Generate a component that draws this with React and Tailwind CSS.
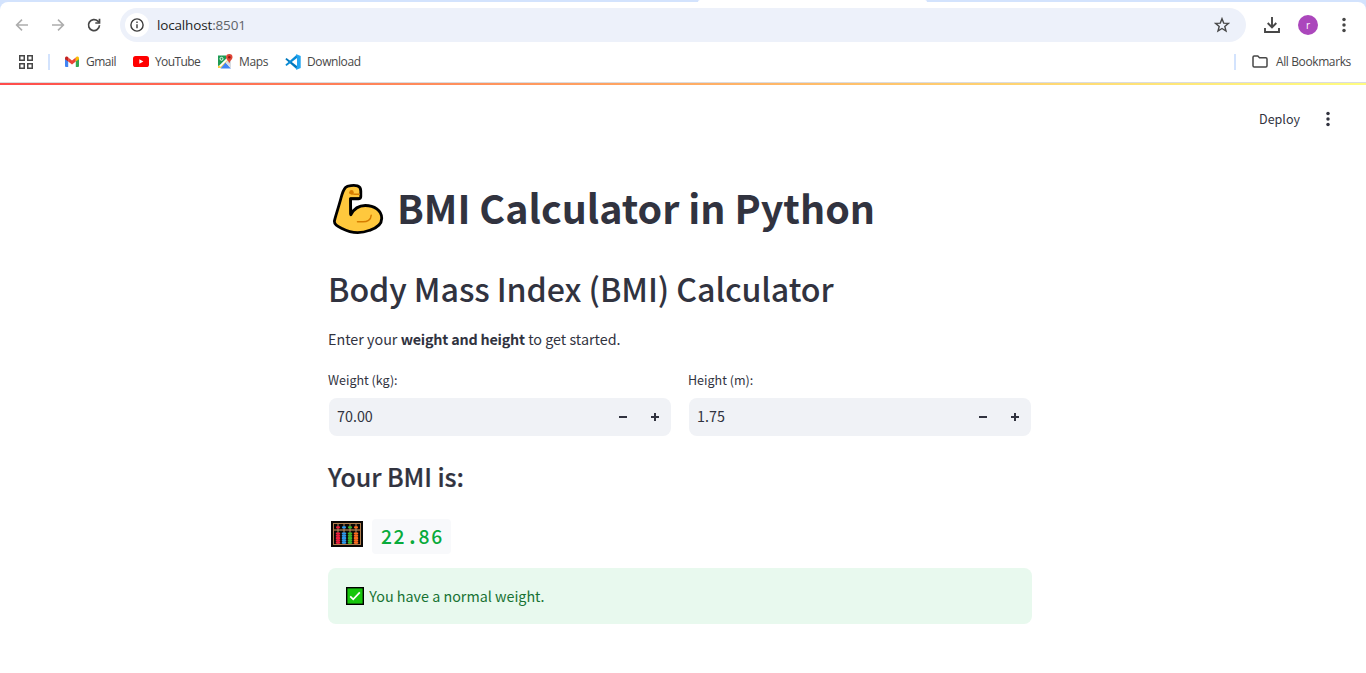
import React from "react";

function Dots({ className }) {
  return (
    <svg className={className} viewBox="0 0 4 16" fill="currentColor">
      <circle cx="2" cy="2.6" r="1.75" />
      <circle cx="2" cy="8" r="1.75" />
      <circle cx="2" cy="13.4" r="1.75" />
    </svg>
  );
}

function Arrow({ flip }) {
  return (
    <svg className={flip ? "h-4 w-4 -scale-x-100" : "h-4 w-4"} viewBox="0 0 16 16" fill="none" stroke="#adadad" strokeWidth="1.6">
      <path d="M14 8H3M8 2.6 2.6 8 8 13.4" />
    </svg>
  );
}

function GmailIcon() {
  return (
    <svg className="h-3 w-[14px]" viewBox="0 0 14 12">
      <path d="M0 2.2 3.2 4.6V11H1a1 1 0 0 1-1-1z" fill="#4285f4" />
      <path d="M14 2.2 10.8 4.6V11H13a1 1 0 0 0 1-1z" fill="#34a853" />
      <path d="M3.2 1.6 7 4.5l3.8-2.9v4L7 8.5 3.2 5.6z" fill="#ea4335" />
      <path d="M0 2.2C0 .5 1.8-.1 3.2 1v4.6L0 3.2z" fill="#c5221f" />
      <path d="M14 2.2C14 .5 12.2-.1 10.8 1v4.6L14 3.2z" fill="#fbbc04" />
    </svg>
  );
}

function YouTubeIcon() {
  return (
    <svg className="h-[11px] w-4" viewBox="0 0 16 11">
      <rect width="16" height="11" rx="2.6" fill="#f00" />
      <path d="M6.3 3.2v4.6l4.1-2.3z" fill="#fff" />
    </svg>
  );
}

function MapsIcon() {
  return (
    <svg className="h-[15px] w-[15px]" viewBox="0 0 15 15">
      <path d="M0 11.5 9.5 1.5 13 4 3 14H0z" fill="#fbd04b" />
      <path d="M2.5 14.5 7.5 8.5 13 14.5z" fill="#4285f4" />
      <path d="M7.5 8.5 11 5.5l2 2v7z" fill="#d8dce1" />
      <path d="M1 11.600 9 3.300l1.800 1.200-8.200 8.300z" fill="#fff" />
      <path d="M0 1.500h8.300v3L1 11.800H0z" fill="#1e9b54" />
      <circle cx="3.500" cy="4.800" r="1.500" fill="none" stroke="#fff" strokeWidth="0.900" />
      <path d="M11.300 0a3.200 3.200 0 0 1 3.200 3.300c0 2.300-2.400 3.100-3.200 6.200C10.500 6.400 8.100 5.600 8.100 3.300A3.200 3.200 0 0 1 11.300 0z" fill="#e04436" />
      <circle cx="11.300" cy="3.200" r="1.200" fill="#8c1b12" />
    </svg>
  );
}

function CodeIcon() {
  return (
    <svg className="h-4 w-4" viewBox="0 0 16 16">
      <path d="M0.300 5.300 1.500 4.100 12 12v3.600z" fill="#0078bd" />
      <path d="M0.300 10.700 1.500 11.900 12 4V.4z" fill="#0a8bd6" />
      <path d="M11.500.2 15.700 2v12l-4.200 1.800-.8-1L12 13V3l-1.300-1.800z" fill="#22a5f1" />
    </svg>
  );
}

function Muscle() {
  return (
    <svg className="mt-px h-[52px] w-[52px] shrink-0" viewBox="0 0 52 52" strokeLinejoin="round">
      <path
        d="M13.500 4.500C15.500 2.500 22 2 25.500 2.800c2.500.8 3.300 2.800 3.300 5.200v5.500c0 1.500-1 2.300-2.500 2.300h-7.800L18.800 31.800c3-6 7.500-9.300 14.500-9.300 9 0 16.200 5 16.400 12.500.2 6-5 10-12 12.300-9 3.500-19 2.800-27.700-1.700-4.500-2.300-8.200-4-7.500-8C3.500 33 6.500 24.500 9 15c1.200-4.500 2.500-8.500 4.500-10.500z"
        fill="#ffc83d" stroke="#000" strokeWidth="2.800"
      />
      <path d="M28 15.500H18.700v16" fill="none" stroke="#000" strokeWidth="2.600" />
      <path d="M18 10c1.500 1.200 3 1.200 5 1.200h4.300M25.500 38.700h4c6 .5 9.500-2 9.700-6.500" fill="none" stroke="#d67d00" strokeWidth="1.500" strokeLinecap="round" />
      <circle cx="19.500" cy="9.300" r="2.200" fill="#d67d00" />
    </svg>
  );
}

const rods = [
  { x: 7, color: "#f01a3c" },
  { x: 13, color: "#2a98f0" },
  { x: 19, color: "#36b82c" },
  { x: 25, color: "#ff6a1c" },
];

function Abacus() {
  return (
    <svg className="mb-1 h-[26px] w-8 shrink-0" viewBox="0 0 32 26">
      <rect width="32" height="26" fill="#0b0806" />
      <rect x="2.500" y="2.500" width="27" height="21" fill="none" stroke="#b07d4c" strokeWidth="1" />
      <path d="M2.500 9h27" stroke="#b07d4c" strokeWidth="1.300" />
      {rods.map((rod) => (
        <g key={rod.x} fill={rod.color}>
          <path d={`M${rod.x} 3v20`} stroke="#c59a6c" strokeWidth="0.900" />
          <rect x={rod.x - 2} y="5.200" width="4" height="2.400" rx="1" />
          {[11.4, 13.7, 16, 18.3, 20.6].map((y) => (
            <rect key={y} x={rod.x - 2.2} y={y} width="4.400" height="2.100" rx="0.700" />
          ))}
        </g>
      ))}
    </svg>
  );
}

function Bookmark({ icon, label, className }) {
  return (
    <div className={`flex shrink-0 items-center ${className}`}>
      {icon}
      <span>{label}</span>
    </div>
  );
}

function BrowserBar() {
  return (
    <div className="bg-[#d3e3fd] font-['Open_Sans','Noto_Sans',sans-serif] text-[#474747]">
      <div className="flex h-[2px] pl-[698px]">
        <div className="h-[2px] w-[229px] rounded-t-[2px] bg-white" />
      </div>
      <div className="h-[81px] rounded-t-[8px] border-b border-[#dadce0] bg-white">
        <div className="flex h-[46px] items-center pl-[14px]">
          <Arrow />
          <div className="ml-5"><Arrow flip /></div>
          <svg className="ml-5 h-4 w-4" viewBox="0 0 16 16" fill="none" stroke="#474747" strokeWidth="1.700">
            <path d="M13.500 8.300A5.500 5.500 0 1 1 11.900 4.200L13 5.300" />
            <path d="M13.500 1.800v4.200H9.300" />
          </svg>
          <div className="ml-[18px] flex h-[34px] w-[1126px] items-center rounded-full bg-[#edf1fa] pl-[5px] pr-4">
            <div className="flex h-6 w-6 items-center justify-center rounded-full bg-white">
              <svg className="h-[14px] w-[14px]" viewBox="0 0 14 14" fill="none" stroke="#3c3c3c" strokeWidth="1.400">
                <circle cx="7" cy="7" r="6.100" />
                <path d="M7 6.200v4M7 3.600v1.500" />
              </svg>
            </div>
            <span className="ml-2 text-[13.5px] leading-5 tracking-[-0.16px] text-[#1f1f1f]">
              localhost<span className="text-[#5f6368]">:8501</span>
            </span>
            <svg className="ml-auto h-4 w-4" viewBox="0 0 16 16" fill="none" stroke="#474747" strokeWidth="1.400">
              <path d="m8 1.700 1.700 4.400 4.700.3-3.600 3 1.200 4.600L8 11.500 4 14l1.200-4.600-3.600-3 4.700-.3z" />
            </svg>
          </div>
          <svg className="ml-[18px] h-4 w-4" viewBox="0 0 16 16" fill="none" stroke="#474747" strokeWidth="1.900">
            <path d="M8 0v10M3.700 6 8 10.300 12.300 6M1 11v4h14v-4" />
          </svg>
          <div className="ml-[18px] flex h-5 w-5 items-center justify-center rounded-full bg-[#ab47bc] text-[10px] leading-none text-white">r</div>
          <Dots className="ml-6 h-4 w-1" />
        </div>
        <div className="flex h-[27px] items-center pl-[18px] pr-[14px] text-[12px] leading-4">
          <svg className="h-4 w-4" viewBox="0 0 16 16" fill="none" stroke="#474747" strokeWidth="1.500">
            <path d="M1.750 1.750h4.500v4.500h-4.500zM9.750 1.750h4.500v4.500h-4.500zM1.750 9.750h4.500v4.500h-4.500zM9.750 9.750h4.500v4.500h-4.500z" />
          </svg>
          <div className="ml-[14px] h-4 w-[2px] bg-[#d3e3fd]" />
          <Bookmark className="ml-[15px] w-[68px] gap-[7px] tracking-[-0.5px]" icon={<GmailIcon />} label="Gmail" />
          <Bookmark className="w-[85px] gap-[6px] tracking-[-0.6px]" icon={<YouTubeIcon />} label="YouTube" />
          <Bookmark className="w-[67px] gap-[6px] tracking-[-0.35px]" icon={<MapsIcon />} label="Maps" />
          <Bookmark className="gap-[6px] tracking-[-0.4px]" icon={<CodeIcon />} label="Download" />
          <div className="ml-auto h-4 w-[2px] bg-[#d3e3fd]" />
          <svg className="ml-4 h-[13px] w-4" viewBox="0 0 16 13" fill="none" stroke="#474747" strokeWidth="1.500">
            <path d="M1 2.200Q1 1 2.200 1h3.600l1.700 1.700h6.300q1.200 0 1.200 1.200v6.900q0 1.200-1.200 1.200H2.200Q1 12 1 10.800z" />
          </svg>
          <span className="ml-2 w-[76px] whitespace-nowrap tracking-[-0.39px]">All Bookmarks</span>
        </div>
      </div>
    </div>
  );
}

function NumberField({ label, value }) {
  return (
    <div className="w-[344px]">
      <div className="h-[26px] text-[12.54px] leading-[20px]">{label}</div>
      <div className="mx-px mt-[2px] flex h-[38px] items-center rounded-lg bg-[#f0f2f6] pl-2 pr-[11px] text-[14.33px] leading-6">
        <span className="pb-[2px]">{value}</span>
        <svg className="ml-auto h-[10px] w-[10px]" viewBox="0 0 10 10" stroke="#31333f" strokeWidth="2">
          <path d="M1 5h8" />
        </svg>
        <svg className="ml-[22px] h-[10px] w-[10px]" viewBox="0 0 10 10" stroke="#31333f" strokeWidth="2">
          <path d="M1 5h8M5 1v8" />
        </svg>
      </div>
    </div>
  );
}

export default function App() {
  return (
    <div className="h-[673px] w-[1366px] overflow-hidden bg-white">
      <BrowserBar />
      <div className="h-[2px] bg-linear-to-r from-[#ff4b4b] to-[#fffd80]" />
      <main className="font-['Noto_Sans_CJK_SC',sans-serif] text-[#31333f]">
        <header className="flex h-[68px] items-center justify-end pr-[36px] text-[12.54px]">
          <span>Deploy</span>
          <Dots className="ml-[26px] h-4 w-1" />
        </header>
        <div className="ml-[328px] w-[704px]">
          <h1 className="mt-[25px] flex h-[60px] items-center whitespace-nowrap pl-1 text-[39.4px] font-bold leading-[58px]">
            <Muscle />
            <span className="ml-[13px] pb-[2px]">BMI Calculator in Python</span>
          </h1>
          <h2 className="mt-[27px] h-[46px] whitespace-nowrap text-[32.2px] font-medium leading-[46px] tracking-[-0.09px]">
            Body Mass Index (BMI) Calculator
          </h2>
          <p className="mt-4 h-6 text-[14.33px] leading-6">
            Enter your <strong className="font-bold tracking-[-0.2px]">weight and height</strong> to get started.
          </p>
          <div className="mt-[19px] flex gap-4">
            <NumberField label="Weight (kg):" value="70.00" />
            <NumberField label="Height (m):" value="1.75" />
          </div>
          <h3 className="mt-[22px] h-9 whitespace-nowrap text-[25px] font-medium leading-9 tracking-[-0.07px] [-webkit-text-stroke:0.2px_#31333f]">Your BMI is:</h3>
          <div className="mt-6 flex h-[36px] items-center pl-[3px]">
            <Abacus />
            <div className="ml-[9px] flex h-[35px] w-[79px] items-center rounded-[4px] bg-[#f8f9fb] pl-[9px] text-[19.3px] font-medium text-[#09ab3b]">
              <span className="tracking-[1.6px]">22</span>
              <span className="w-[12.4px] text-center font-bold">.</span>
              <span className="tracking-[1.6px]">86</span>
            </div>
          </div>
          <div className="mt-[14px] flex h-14 items-center rounded-lg bg-[#e8f9ee] pl-[18px] text-[14.33px] text-[#177233]">
            <svg className="h-[18px] w-[18px]" viewBox="0 0 18 18">
              <rect x="0.700" y="0.700" width="16.600" height="16.600" fill="#16c60c" stroke="#000" strokeWidth="1.400" />
              <path d="m4.200 9.300 3 3 6.600-7" fill="none" stroke="#fff" strokeWidth="1.700" />
            </svg>
            <span className="ml-[5.3px]">You have a normal weight.</span>
          </div>
        </div>
      </main>
    </div>
  );
}
